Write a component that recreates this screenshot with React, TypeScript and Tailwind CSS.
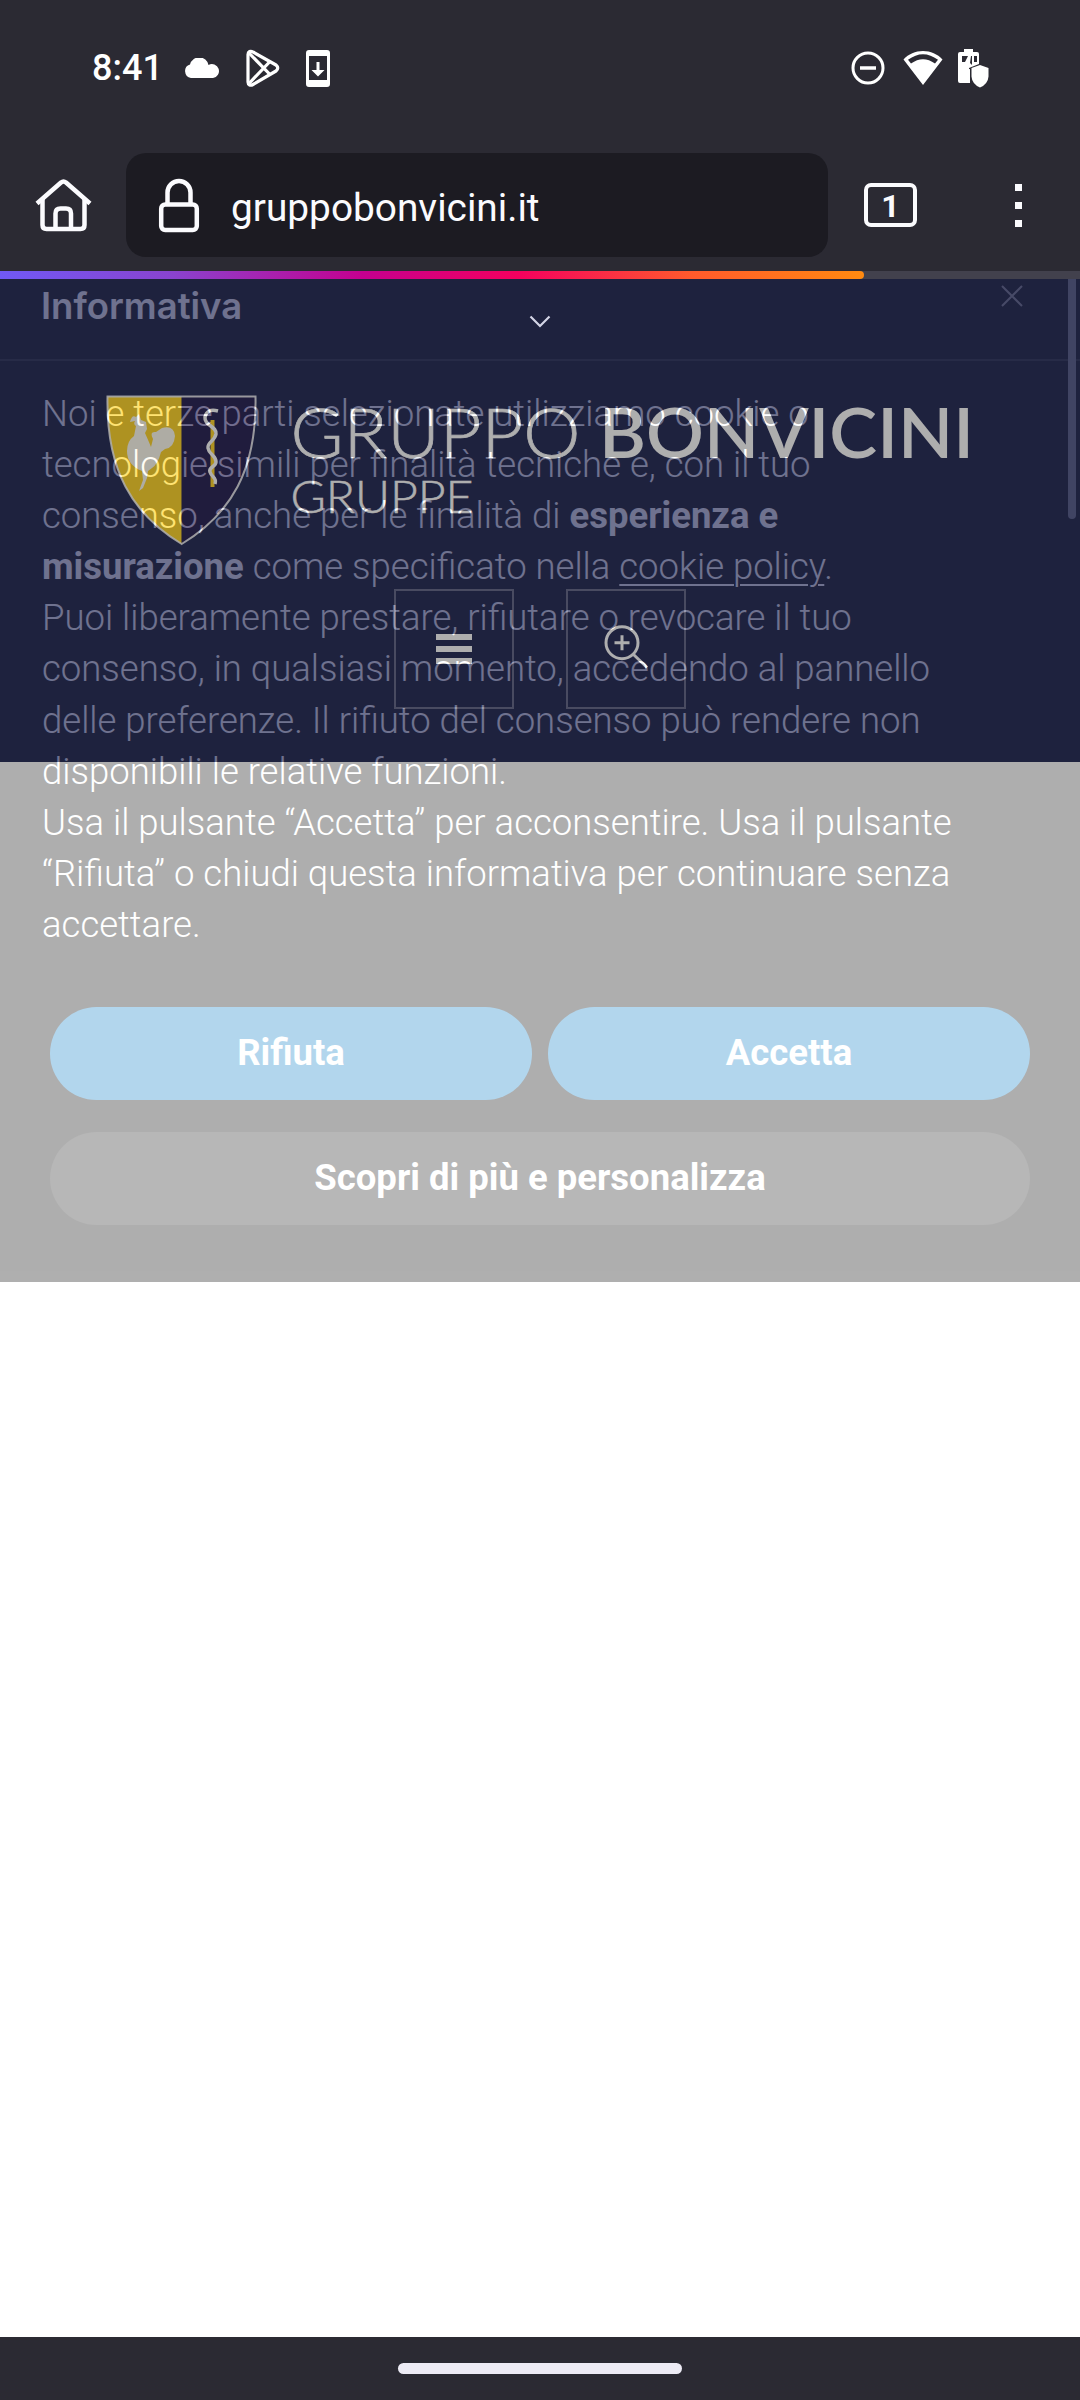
import React from "react";

function StatusBar() {
  return (
    <div className="flex h-[136px] items-center pl-[92px] pr-[90px] text-white">
      <span className="w-[92px] text-[36px] font-medium leading-none">8:41</span>
      <svg className="h-[20px] w-[36px]" viewBox="0 0 36 20" fill="currentColor">
        <path d="M7 20a7 7 0 0 1-1-13.600A9.500 9.500 0 0 1 24.500 7 7 7 0 1 1 29 20Z" />
      </svg>
      <svg className="ml-[26px] h-[38px] w-[34px]" viewBox="0 0 34 38" fill="none" stroke="currentColor" strokeWidth="3.200" strokeLinejoin="round">
        <path d="M2 5.500C2 2.500 4.500 1.500 7 3L30 16Q33.500 19 30 22L7 35.500C4.500 37 2 36 2 33Z" />
        <path d="M3 4 24 25.500M3 34.500 24 12.500" />
      </svg>
      <svg className="ml-[26px] h-[37px] w-[24px]" viewBox="0 0 24 37">
        <path fill="currentColor" fillRule="evenodd" d="M3 0h18q3 0 3 3v31q0 3-3 3H3q-3 0-3-3V3q0-3 3-3ZM3 6v24h18V6ZM10.500 12h3v8h5L12 26.500 5.500 20h5Z" />
      </svg>
      <div className="flex-1" />
      <svg className="h-[34px] w-[34px]" viewBox="0 0 34 34" fill="none" stroke="currentColor" strokeWidth="3">
        <circle cx="17" cy="17" r="15" />
        <path d="M9 17h16" strokeWidth="3.500" />
      </svg>
      <svg className="ml-[18px] h-[34px] w-[40px]" viewBox="0 0 40 34">
        <path fill="currentColor" fillRule="evenodd" d="M20 0C12.500 0 5.500 3 .500 8.500L20 34 39.500 8.500C34.500 3 27.500 0 20 0ZM5 8.800Q20-2.500 35 8.800L32 12.600Q20 4 8 12.600Z" />
      </svg>
      <svg className="ml-[15px] h-[39px] w-[32px]" viewBox="0 0 32 39">
        <path fill="currentColor" fillRule="evenodd" d="M6 0h9v3h4q2 0 2 2v10L11 19v15H2q-2 0-2-2V5q0-2 2-2h4ZM4 7v6l3 0 3-6ZM13 7l-1 7 2 2V7ZM16 7v6h3V7Z" />
        <path fill="currentColor" d="m6 21 6-1v14H5ZM22 16l8.500 3v8.500Q30 35 22 38.500 14 35 13.500 27.500V19Z" />
      </svg>
    </div>
  );
}

function Toolbar() {
  return (
    <div className="flex h-[135px] items-center pt-[3px] text-[#fbfbfe]">
      <svg className="ml-[35px] h-[54px] w-[57px]" viewBox="0 0 57 54" fill="none" stroke="currentColor" strokeWidth="4.500" strokeLinejoin="round">
        <path d="M2 25.500 26 4.500q2.500-2 5 0L55 25.500" />
        <path d="M7.500 21v26q0 4 4 4h34q4 0 4-4V21" />
        <path d="M20.500 50V35.500q0-5 5-5h5.500q5 0 5 5V50" />
      </svg>
      <div className="ml-[34px] flex h-[104px] w-[702px] items-center rounded-[20px] bg-[#1c1b22]">
        <svg className="ml-[32px] h-[56px] w-[42px]" viewBox="0 0 42 56" fill="none" stroke="currentColor" strokeWidth="4.500">
          <path d="M9.500 28V15.500a11.500 11.500 0 0 1 23 0V28" />
          <rect x="3.200" y="27.500" width="35.600" height="25.500" rx="4" />
        </svg>
        <span className="ml-[31px] pt-[6px] text-[38.800px] leading-none">gruppobonvicini.it</span>
      </div>
      <div className="ml-[36px] flex h-[44px] w-[53px] items-center justify-center rounded-[7px] border-[4px] border-[#fbfbfe] pt-[2px] text-[32px] font-bold leading-none">
        1
      </div>
      <div className="ml-[98px] flex flex-col gap-[11px]">
        <i className="size-[7px] bg-[#fbfbfe]" />
        <i className="size-[7px] bg-[#fbfbfe]" />
        <i className="size-[7px] bg-[#fbfbfe]" />
      </div>
    </div>
  );
}

function Logo() {
  return (
    <svg className="ml-[106px] h-[152px] w-[870px]" viewBox="106 395 870 152">
      <path d="M107.500 396.500H181.700V544C132 514 106 470 107.500 396.500Z" fill="#ffd731" />
      <path d="M181.700 396.500H255.500C257 470 231 514 181.700 544Z" fill="#30295a" />
      <path d="M107.500 396.500H255.500C257 470 231 514 181.700 544C132 514 106 470 107.500 396.500Z" fill="none" stroke="#fff" strokeOpacity=".85" strokeWidth="2" />
      <path fill="#fff" fillOpacity=".93" d="M130 422q2-8 6-5l3-3 2 6 5 2 1 7-2 4q4 9 6 14l2-8q-4-8 3-7l6-4q12-3 13 8-1 12-10 13l-4 3q-3 12-9 16l-4 3-1 7-4 10-4 3 4-11-1-9q-15-6-15-20 0-10 7-15l2-10q-3-2-1-5Z" />
      <path d="M212.500 420v67" stroke="#ffd731" strokeWidth="4" />
      <path d="M218 411q-11-3-13 6c-1 9 12 9 11 17-1 7-9 8-8 14 1 7 8 7 8 14 0 5-8 5-6 10 2 6 7 5 5 12" fill="none" stroke="#fff" strokeWidth="3.500" />
      <g fill="#fff" stroke="#fff" fontFamily="Lato, sans-serif">
        <text x="290.500" y="457.500" fontSize="69" fontWeight="300" strokeWidth=".7" textLength="290" lengthAdjust="spacingAndGlyphs">GRUPPO</text>
        <text x="599" y="457.500" fontSize="69" fontWeight="600" stroke="none" textLength="375" lengthAdjust="spacingAndGlyphs">BONVICINI</text>
        <text x="290.500" y="513" fontSize="46" fontWeight="300" strokeWidth=".5" textLength="183" lengthAdjust="spacingAndGlyphs">GRUPPE</text>
      </g>
    </svg>
  );
}

function SiteHeader() {
  return (
    <header className="h-[483px] bg-[#2d325c] pt-[116px]">
      <Logo />
      <div className="mt-[42px] flex justify-center gap-[52px]">
        <div className="flex h-[120px] w-[120px] flex-col items-center gap-[6px] border-2 border-[#6c6e8e] pt-[43px]">
          <i className="h-[6px] w-[36px] bg-white" />
          <i className="h-[6px] w-[36px] bg-white" />
          <i className="h-[6px] w-[36px] bg-white" />
        </div>
        <div className="h-[120px] w-[120px] border-2 border-[#6c6e8e]">
          <svg className="size-full" viewBox="568 591 116 116" fill="none" stroke="#fff" strokeWidth="3">
            <circle cx="622" cy="642.700" r="16" />
            <path d="M614.500 642.700h15M622 635.200v15M633.500 654.500 647 667.500" />
          </svg>
        </div>
      </div>
    </header>
  );
}

function CookieNotice() {
  return (
    <section className="absolute inset-x-0 top-0 h-[1003px] bg-black text-white opacity-[0.315]">
      <div className="flex h-[82px] items-start justify-between border-b-2 border-[#1c1c1c] pl-[41px] pr-[57px] pt-[5px]">
        <h1 className="font-[Inter] text-[36.500px] font-semibold leading-[44px]">Informativa</h1>
        <svg className="mt-[1px] size-[22px] opacity-50" viewBox="0 0 22 22" stroke="#fff" strokeWidth="2">
          <path d="m1 1 20 20M21 1 1 21" />
        </svg>
      </div>
      <p className="mt-[27px] whitespace-nowrap pl-[42px] text-[36.500px] font-light leading-[51.100px]">
        Noi e terze parti selezionate utilizziamo cookie o<br />
        tecnologie simili per finalità tecniche e, con il tuo<br />
        consenso, anche per le finalità di <b className="font-bold">esperienza e</b><br />
        <b className="font-bold">misurazione</b> come specificato nella{" "}
        <a className="underline decoration-2 underline-offset-[5px]">cookie policy</a>.<br />
        Puoi liberamente prestare, rifiutare o revocare il tuo<br />
        consenso, in qualsiasi momento, accedendo al pannello<br />
        delle preferenze. Il rifiuto del consenso può rendere non<br />
        disponibili le relative funzioni.<br />
        Usa il pulsante “Accetta” per acconsentire. Usa il pulsante<br />
        “Rifiuta” o chiudi questa informativa per continuare senza<br />
        accettare.
      </p>
      <div className="mt-[57px] grid grid-cols-2 gap-x-[16px] gap-y-[32px] pl-[50px] pr-[50px] text-[36.500px] font-bold">
        <button className="h-[93px] rounded-full bg-[#0e7fc8]">Rifiuta</button>
        <button className="h-[93px] rounded-full bg-[#0e7fc8]">Accetta</button>
        <button className="col-span-2 h-[93px] rounded-full bg-[#1c1c1c]">Scopri di più e personalizza</button>
      </div>
      <i className="absolute right-[4px] top-0 h-[240px] w-[8px] rounded-b-full bg-[#6c6c75]" />
    </section>
  );
}

export default function App() {
  return (
    <div className="flex h-[2400px] w-[1080px] flex-col overflow-hidden bg-[#2b2a33] font-[Roboto,sans-serif]">
      <StatusBar />
      <Toolbar />
      <div className="h-[8px] bg-[#42414d]">
        <div className="h-full w-[864px] rounded-r-full bg-[linear-gradient(90deg,#7059f5_0%,#8a43cf_20%,#c4008f_42%,#f5005e_60%,#ff5a2c_80%,#ff8a10_100%)]" />
      </div>
      <main className="relative h-[2058px] bg-white">
        <SiteHeader />
        <CookieNotice />
        <svg className="absolute left-[529px] top-[36px] h-[13px] w-[22px]" viewBox="0 0 22 13" fill="none" stroke="#d3d5e6" strokeWidth="2.200">
          <path d="m1.500 1.500 9.500 9.500 9.500-9.500" />
        </svg>
      </main>
      <footer className="flex flex-1 justify-center pt-[26px]">
        <div className="h-[11px] w-[284px] rounded-full bg-[#edebf5]" />
      </footer>
    </div>
  );
}
